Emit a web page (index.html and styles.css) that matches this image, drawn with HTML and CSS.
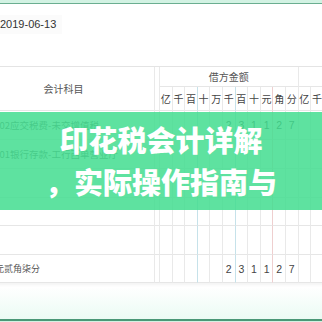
FILE: index.html
```html
<!DOCTYPE html>
<html lang="zh">
<head>
<meta charset="utf-8">
<title>印花税会计详解</title>
<link rel="stylesheet" href="styles.css">
</head>
<body>
<div class="shot">
  <div class="edge-top"></div>
  <main class="sheet">
    <div class="date">2019-06-13</div>
    <div class="voucher">
      <div class="c subj-h">会计科目</div>
      <div class="c gap span2"></div>
      <div class="c dir">借方金额</div>
      <div class="c dir">贷方金额</div>

      <div class="c u">亿</div><div class="c u">千</div><div class="c u g">百</div><div class="c u">十</div><div class="c u">万</div><div class="c u g">千</div><div class="c u">百</div><div class="c u">十</div><div class="c u r">元</div><div class="c u">角</div><div class="c u">分</div>
      <div class="c u">亿</div><div class="c u">千</div><div class="c u g">百</div><div class="c u">十</div><div class="c u">万</div><div class="c u g">千</div><div class="c u">百</div><div class="c u">十</div><div class="c u r">元</div><div class="c u">角</div><div class="c u">分</div>

      <div class="c subj">2202应交税费-未交增值税</div><div class="c gap"></div>
      <div class="c m"></div><div class="c m"></div><div class="c m g"></div><div class="c m"></div><div class="c m"></div><div class="c m g">2</div><div class="c m">3</div><div class="c m">1</div><div class="c m r">1</div><div class="c m">2</div><div class="c m">7</div>
      <div class="c m"></div><div class="c m"></div><div class="c m g"></div><div class="c m"></div><div class="c m"></div><div class="c m g"></div><div class="c m"></div><div class="c m"></div><div class="c m r"></div><div class="c m"></div><div class="c m"></div>

      <div class="c subj">1001银行存款-工行西单营业厅</div><div class="c gap"></div>
      <div class="c m"></div><div class="c m"></div><div class="c m g"></div><div class="c m"></div><div class="c m"></div><div class="c m g"></div><div class="c m"></div><div class="c m"></div><div class="c m r"></div><div class="c m"></div><div class="c m"></div>
      <div class="c m"></div><div class="c m"></div><div class="c m g"></div><div class="c m"></div><div class="c m"></div><div class="c m g">2</div><div class="c m">3</div><div class="c m">1</div><div class="c m r">1</div><div class="c m">2</div><div class="c m">7</div>

      <div class="c subj"></div><div class="c gap"></div>
      <div class="c m"></div><div class="c m"></div><div class="c m g"></div><div class="c m"></div><div class="c m"></div><div class="c m g"></div><div class="c m"></div><div class="c m"></div><div class="c m r"></div><div class="c m"></div><div class="c m"></div>
      <div class="c m"></div><div class="c m"></div><div class="c m g"></div><div class="c m"></div><div class="c m"></div><div class="c m g"></div><div class="c m"></div><div class="c m"></div><div class="c m r"></div><div class="c m"></div><div class="c m"></div>

      <div class="c subj"></div><div class="c gap"></div>
      <div class="c m"></div><div class="c m"></div><div class="c m g"></div><div class="c m"></div><div class="c m"></div><div class="c m g"></div><div class="c m"></div><div class="c m"></div><div class="c m r"></div><div class="c m"></div><div class="c m"></div>
      <div class="c m"></div><div class="c m"></div><div class="c m g"></div><div class="c m"></div><div class="c m"></div><div class="c m g"></div><div class="c m"></div><div class="c m"></div><div class="c m r"></div><div class="c m"></div><div class="c m"></div>

      <div class="c subj"></div><div class="c gap"></div>
      <div class="c m"></div><div class="c m"></div><div class="c m g"></div><div class="c m"></div><div class="c m"></div><div class="c m g"></div><div class="c m"></div><div class="c m"></div><div class="c m r"></div><div class="c m"></div><div class="c m"></div>
      <div class="c m"></div><div class="c m"></div><div class="c m g"></div><div class="c m"></div><div class="c m"></div><div class="c m g"></div><div class="c m"></div><div class="c m"></div><div class="c m r"></div><div class="c m"></div><div class="c m"></div>

      <div class="c subj"><span class="total">合计：贰仟叁佰壹拾壹元贰角柒分</span></div><div class="c gap"></div>
      <div class="c m"></div><div class="c m"></div><div class="c m g"></div><div class="c m"></div><div class="c m"></div><div class="c m g">2</div><div class="c m">3</div><div class="c m">1</div><div class="c m r">1</div><div class="c m">2</div><div class="c m">7</div>
      <div class="c m"></div><div class="c m"></div><div class="c m g"></div><div class="c m"></div><div class="c m"></div><div class="c m g">2</div><div class="c m">3</div><div class="c m">1</div><div class="c m r">1</div><div class="c m">2</div><div class="c m">7</div>
    </div>
  </main>
  <div class="edge-bottom"></div>
  <div class="banner">
    <span class="line">印花税会计详解</span>
    <span class="line">，实际操作指南与</span>
  </div>
</div>
</body>
</html>
```

FILE: styles.css
```css
* { box-sizing: border-box; }
html, body { margin: 0; padding: 0; }
body {
  width: 322px;
  height: 322px;
  overflow: hidden;
  background: #fff;
  font-family: "Noto Sans CJK SC", "Liberation Sans", sans-serif;
}
.shot {
  position: relative;
  width: 322px;
  height: 322px;
  display: flex;
  flex-direction: column;
  overflow: hidden;
}
.edge-top {
  height: 4px;
  flex: none;
  background: #d2f2e3;
  border-bottom: 1px solid #6aae90;
}
.sheet {
  flex: 1;
  overflow: hidden;
  background: linear-gradient(to bottom, #fff 0, #fff calc(100% - 32px), #ebfbf4 100%);
  padding-top: 11px;
}
.date {
  height: 19px;
  line-height: 19px;
  width: 62px;
  font-family: "Liberation Sans", sans-serif;
  font-size: 11px;
  color: #333;
  background: #fbfbfb;
}
.voucher {
  margin-top: 32px;
  margin-left: -27px;
  width: max-content;
  display: grid;
  grid-template-columns: 182px 5px repeat(22, 12.6px);
  grid-template-rows: 20px 24px 29px 29px 29px 28px 29px 28px;
  border-top: 1px solid #e4e4e4;
  box-shadow: 0 2px 3px rgba(0, 0, 0, 0.05);
  background: #fff;
  color: #555;
  font-size: 10px;
}
.c {
  display: flex;
  align-items: center;
  justify-content: center;
  border-right: 1px solid #e9e9e9;
  border-bottom: 1px solid #e6e6e6;
  white-space: nowrap;
  overflow: hidden;
}
.subj-h { grid-row: span 2; }
.span2 { grid-row: span 2; }
.dir { grid-column: span 11; color: #555; }
.u { font-size: 10px; color: #444; }
.m {
  font-family: "Liberation Sans", sans-serif;
  font-size: 10.5px;
  color: #444;
}
.g { border-right-color: #c6e2ea; }
.r { border-right-color: #efcfcf; }
.subj {
  justify-content: flex-start;
  padding-left: 16px;
  font-size: 9.5px;
  color: #666;
}
.total {
  flex: none;
  margin-left: -84px;
  font-size: 9px;
  color: #555;
}
.edge-bottom {
  height: 3px;
  flex: none;
  border-top: 2px solid #4a9877;
  background: #d4f1e3;
}
.banner {
  position: absolute;
  left: 0;
  top: 112px;
  width: 322px;
  height: 98px;
  padding-bottom: 3px;
  background: rgba(66, 221, 143, 0.85);
  display: flex;
  flex-direction: column;
  align-items: center;
  justify-content: center;
  color: #fff;
  font-family: "Noto Sans CJK SC", sans-serif;
  font-weight: 900;
  font-size: 29px;
  line-height: 42px;
}
.line { display: block; }
```
